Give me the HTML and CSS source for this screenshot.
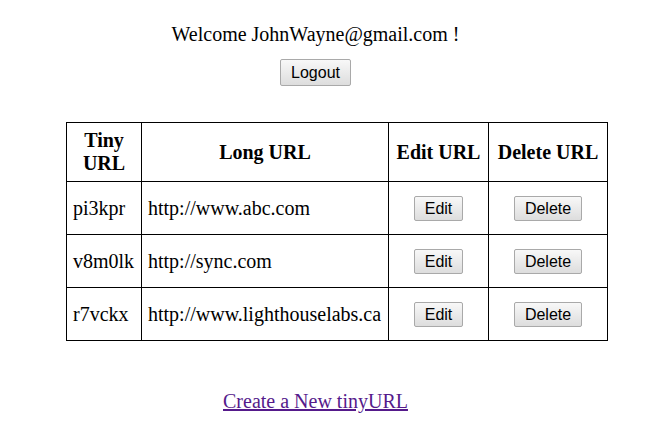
FILE: index.html
```html
<!DOCTYPE html>
<html>
<head>
<meta charset="utf-8">
<link rel="stylesheet" href="styles.css">
</head>
<body>
<div class="page">
  <header class="top">
    <div class="welcome">Welcome JohnWayne@gmail.com !</div>
    <button class="btn logout">Logout</button>
  </header>
  <table class="urls">
    <colgroup>
      <col class="c1"><col class="c2"><col class="c3"><col class="c4">
    </colgroup>
    <thead>
      <tr><th>Tiny<br>URL</th><th>Long URL</th><th>Edit URL</th><th>Delete URL</th></tr>
    </thead>
    <tbody>
      <tr><td>pi3kpr</td><td>http://www.abc.com</td><td class="ctr"><button class="btn">Edit</button></td><td class="ctr"><button class="btn">Delete</button></td></tr>
      <tr><td>v8m0lk</td><td>http://sync.com</td><td class="ctr"><button class="btn">Edit</button></td><td class="ctr"><button class="btn">Delete</button></td></tr>
      <tr><td>r7vckx</td><td>http://www.lighthouselabs.ca</td><td class="ctr"><button class="btn">Edit</button></td><td class="ctr"><button class="btn">Delete</button></td></tr>
    </tbody>
  </table>
  <div class="create"><a href="#">Create a New tinyURL</a></div>
</div>
</body>
</html>
```
FILE: styles.css
```css
html, body { margin: 0; padding: 0; background: #fff; }
body {
  font-family: "Liberation Serif", "Times New Roman", serif;
  font-size: 20px;
  color: #000;
}
.page {
  width: 615px;
  margin-left: 8px;
  padding-top: 23px;
}
.top {
  display: flex;
  flex-direction: column;
  align-items: center;
}
.welcome {
  line-height: 23px;
  height: 23px;
}
.btn {
  font-family: "Liberation Sans", Arial, sans-serif;
  font-size: 16px;
  line-height: 19px;
  color: #000;
  background: linear-gradient(#f8f8f8, #dddddd);
  border: 1px solid #a9a9a9;
  border-radius: 2px;
  padding: 2px 8px 2px 8px;
  margin: 0;
}
.logout {
  margin-top: 13px;
  height: 27px;
  width: 71px;
}
.urls {
  margin-top: 36px;
  margin-left: 58px;
  border-collapse: collapse;
  width: 541px;
  table-layout: fixed;
}
.c1 { width: 75px; }
.c2 { width: 247px; }
.c3 { width: 100px; }
.c4 { width: 119px; }
.urls th, .urls td {
  border: 1px solid #000;
  padding: 0 6px;
}
.urls th {
  height: 58px;
  font-weight: bold;
  line-height: 23px;
  text-align: center;
}
.urls td {
  height: 52px;
  line-height: 23px;
  text-align: left;
  white-space: nowrap;
}
.urls td.ctr { text-align: center; }
.urls td .btn { height: 25px; padding: 1px 10px; }
.create {
  text-align: center;
  margin-top: 49px;
}
.create a { color: #551a8b; text-decoration: underline; }
```
